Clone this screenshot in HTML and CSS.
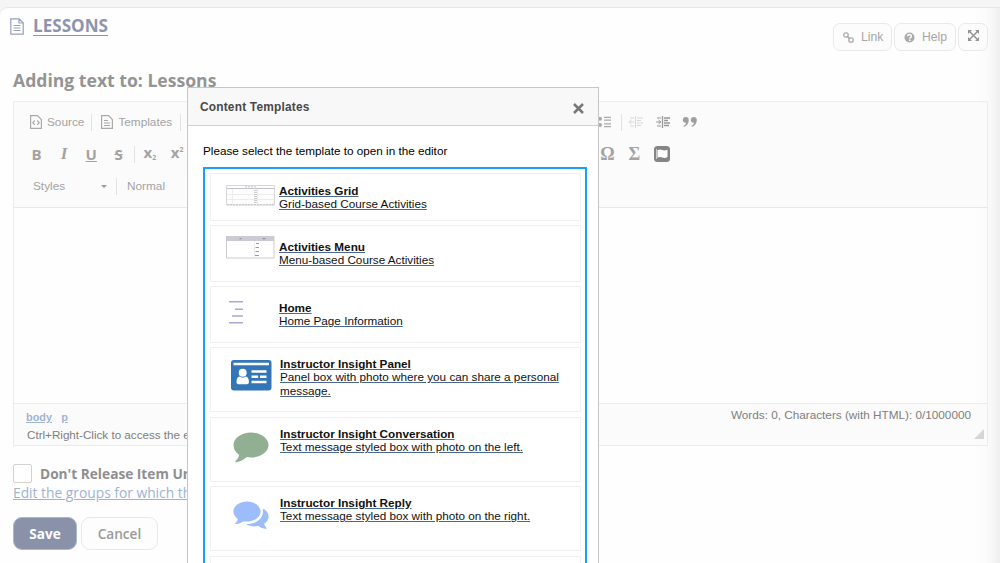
FILE: index.html
```html
<!DOCTYPE html>
<html lang="en">
<head>
  <meta charset="UTF-8">
  <title>Lessons</title>
  <link rel="stylesheet" href="styles.css">
</head>
<body>

  <main class="page">
    <header class="page-header">
      <svg class="doc-icon" width="14" height="17" viewBox="0 0 14 17" fill="none" stroke="#98a1bb">
        <path d="M.8 .8h8.4l4 4v11.4H.8zM9 .8V5h4.2M3.5 7.5h7M3.5 10h7M3.5 12.5h7" stroke-width="1.200"/>
      </svg>
      <a href="#" class="page-title">LESSONS</a>
      <div class="page-actions">
        <button class="action">
          <svg width="11" height="11" viewBox="0 0 11 11" fill="none" stroke="#aaa" stroke-width="1.3">
            <rect x=".8" y=".8" width="4.4" height="4.4" rx="1.9"/>
            <rect x="5.8" y="5.8" width="4.4" height="4.4" rx="1.9"/>
            <path d="M4 4l3 3"/>
          </svg>
          <span>Link</span>
        </button>
        <button class="action action-help">
          <svg width="11" height="11" viewBox="0 0 11 11">
            <circle cx="5.5" cy="5.5" r="5" fill="#aaa"/>
            <path d="M3.7 4.3c0-2.4 3.7-2.3 3.7-.1 0 1.2-1.7 1.2-1.7 2.5" fill="none" stroke="#fff" stroke-width="1.4"/>
            <path d="M5 7.5h1.5v1.4H5z" fill="#fff"/>
          </svg>
          <span>Help</span>
        </button>
        <button class="action action-expand">
          <svg width="11" height="11" viewBox="0 0 11 11" fill="#939393">
            <path d="M0 0h4L0 4zM11 0v4L7 0zM0 11V7l4 4zM11 11H7l4-4z"/>
            <path d="M1.5 1.5l8 8M9.5 1.5l-8 8" stroke="#939393" stroke-width="1.5"/>
          </svg>
        </button>
      </div>
    </header>

    <h2 class="form-title">Adding text to: Lessons</h2>

    <div class="editor">
      <div class="toolbar">
        <div class="tool-row">
          <div class="tools-left">
            <span class="tool-text">
              <svg width="12" height="14" viewBox="0 0 12 14" fill="none" stroke="#aaa">
                <path d="M.6 .6h6.9l3.9 3.9v8.9H.6zM4.8 5.5L2.8 7.7l2 2.2M7.2 5.5l2 2.2-2 2.2" stroke-width="1.2"/>
              </svg>
              Source
            </span>
            <i class="sep sep-source"></i>
            <span class="tool-text tool-templates">
              <svg width="12" height="14" viewBox="0 0 12 14" fill="none" stroke="#aaa">
                <path d="M.6 .6h6.9l3.9 3.9v8.9H.6zM3 5.500h4M3 8h6M3 10.500h6" stroke-width="1.2"/>
              </svg>
              Templates
            </span>
            <i class="sep sep-templates"></i>
          </div>
          <div class="tools-right">
            <svg class="tool" viewBox="0 0 16 16" fill="#aaa">
              <circle cx="3" cy="4.8" r="2"/><circle cx="3" cy="11" r="2"/>
              <path d="M7 2.800h7v1.200H7zM7 5.500h7v1.200H7zM7 9.300h7v1.200H7zM7 12h7v1.200H7z"/>
            </svg>
            <i class="sep"></i>
            <svg class="tool faded" viewBox="0 0 16 16" fill="none" stroke="#999">
              <path d="M7.5 2v12M2 4h4M9 4h6M9 6.5h4M9 9h6M9 11.5h4M2 12h4M1 8h5M3.5 6L1 8l2.5 2"/>
            </svg>
            <svg class="tool" viewBox="0 0 16 16" fill="none" stroke="#999">
              <path d="M7.500 2v12M9 4h6M9 6.500h4M9 9h6M9 11.500h5" stroke-width="1.300"/>
              <path d="M2 4h4M2 12h4M1 8h5M3.500 6L6 8l-2.500 2"/>
            </svg>
            <svg class="tool" viewBox="0 0 16 16" fill="#a0a0a0">
              <path d="M.8 6a3 3 0 1 1 6 0c0 3.3-1.8 5.7-4.8 6.9l-.5-1C3 11 4 10 4 8.700 2.200 9 .8 7.700 .8 6zM8.800 6a3 3 0 1 1 6 0c0 3.300-1.800 5.700-4.800 6.900l-.5-1c1.500-.9 2.500-1.900 2.500-3.200C10.200 9 8.800 7.700 8.800 6z"/>
            </svg>
          </div>
        </div>

        <div class="tool-row">
          <div class="tools-left tools-format">
            <b class="letter">B</b>
            <em class="letter letter-i">I</em>
            <b class="letter letter-u">U</b>
            <b class="letter letter-s">S</b>
            <i class="sep sep-format"></i>
            <b class="letter letter-x">x<small>2</small></b>
            <b class="letter letter-x sup">x<small>2</small></b>
          </div>
          <div class="tools-right tools-insert">
            <span class="symbol">Ω</span>
            <span class="symbol">Σ</span>
            <svg class="tool flag" viewBox="0 0 16 16">
              <rect width="16" height="16" rx="3.500" fill="#858585"/>
              <path d="M2.500 3v10" stroke="#fff" fill="none" stroke-width=".6"/>
              <path d="M3.500 4.300c2-1.300 3.500-.8 4.700-.3s2.700.8 5.300-.2v7.300c-2.500 1.300-4 .8-5.200.3s-2.800-.9-4.800.3z" fill="#fff"/>
            </svg>
          </div>
        </div>

        <div class="tool-row">
          <div class="tools-left tools-select">
            <span class="combo">Styles <i class="caret"></i></span>
            <i class="sep sep-styles"></i>
            <span>Normal</span>
          </div>
        </div>
      </div>

      <div class="edit-area"></div>

      <footer class="editor-footer">
        <div class="path">
          <a href="#">body</a>
          <a href="#">p</a>
          <p>Ctrl+Right-Click to access the editor menu</p>
        </div>
        <div class="count">Words: 0, Characters (with HTML): 0/1000000</div>
        <i class="resizer"></i>
      </footer>
    </div>

    <div class="release">
      <label class="release-label"><input type="checkbox"> Don't Release Item Until</label>
      <a href="#">Edit the groups for which this</a>
    </div>

    <div class="buttons">
      <button class="btn btn-save">Save</button>
      <button class="btn">Cancel</button>
    </div>
  </main>

  <div class="dialog">
    <div class="dialog-header">
      <span>Content Templates</span>
      <svg width="11" height="11" viewBox="0 0 11 11" stroke="#777" stroke-width="2.500">
        <path d="M1 1l9 9M10 1l-9 9"/>
      </svg>
    </div>
    <div class="dialog-body">
      <p>Please select the template to open in the editor</p>
      <div class="templates">
        <a href="#" class="template template-grid">
          <svg class="thumb" width="49" height="21" viewBox="0 0 49 21">
            <path d="M.5 .5h48v19.500H.5z" fill="#fdfdfd" stroke="#d8d8d8"/>
            <path d="M1 3.500h47" stroke="#bfc1cc"/>
            <path d="M1 9.500h47M1 14.500h47M6.500 4v16M31.500 4v16" stroke="#ececec"/>
            <path d="M1 19.700h47M19 1.800h11" stroke="#c4c4c4" stroke-dasharray="2 1"/>
            <path d="M29.500 5v14" stroke="#ccc" stroke-width="3" stroke-dasharray="1 1"/>
          </svg>
          <span class="info"><b>Activities Grid</b><span>Grid-based Course Activities</span></span>
        </a>
        <a href="#" class="template template-menu">
          <svg class="thumb" width="49" height="23" viewBox="0 0 49 23">
            <path d="M.5 .5h47.500v21.500H.5z" fill="#fff" stroke="#ccc"/>
            <path d="M0 0h48v5H0z" fill="#cbcad5"/>
            <path d="M13.500 2.700h2M36.500 2.700h3" stroke="#888"/>
            <path d="M28.500 5v17" stroke="#eee"/>
            <path d="M30 7.500h3M29.500 11.500h3.500M29.500 15.500h3.500M29 19.500h4" stroke="#999" stroke-width="1.200"/>
          </svg>
          <span class="info"><b>Activities Menu</b><span>Menu-based Course Activities</span></span>
        </a>
        <a href="#" class="template template-home">
          <svg class="thumb" width="49" height="25" viewBox="0 0 49 25" fill="none" stroke="#aaa8d4" stroke-width="1.500">
            <path d="M3 1.800h14M9 9.200h8M6 16h11M3 22.800h14"/>
          </svg>
          <span class="info"><b>Home</b><span>Home Page Information</span></span>
        </a>
        <a href="#" class="template template-panel">
          <svg class="thumb" width="41" height="31" viewBox="0 0 41 31">
            <rect width="40.500" height="30.500" rx="3" fill="#3276b8"/>
            <g fill="#fff">
              <path d="M2.500 2.700h35.500v2.500H2.500z"/>
              <circle cx="11.700" cy="12.800" r="4"/>
              <path d="M5.500 22c0-3 1-5.200 3-5.400 1.900 1.500 4.500 1.500 6.400 0 2 .2 3 2.400 3 5.400 0 1.500-.8 2.200-2 2.200H7.500c-1.200 0-2-.7-2-2.200z"/>
              <path d="M20.500 10.300h15v2.500h-15zM20.500 15.500h6.700V18h-6.700zM29 15.500h6.500V18H29zM20.500 20.700h15v2.500h-15z"/>
            </g>
          </svg>
          <span class="info"><b>Instructor Insight Panel</b><span>Panel box with photo where you can share a personal message.</span></span>
        </a>
        <a href="#" class="template template-talk">
          <svg class="thumb" width="36" height="32" viewBox="0 0 36 32" fill="#91af92">
            <path d="M18 .5c9.700 0 17.500 5.600 17.500 12.500S27.700 25.500 18 25.500c-1.500 0-3-.1-4.300-.4-3 3-6.500 4.700-10.300 5.200-1 .1-1.300-1-.6-1.700 2-1.900 3-3.300 3.200-5.800C2.500 20.500 .5 17 .5 13 .5 6.100 8.300 .5 18 .5z"/>
          </svg>
          <span class="info"><b>Instructor Insight Conversation</b><span>Text message styled box with photo on the left.</span></span>
        </a>
        <a href="#" class="template template-talk template-reply">
          <svg class="thumb" width="36" height="29" viewBox="0 0 36 29" fill="#9dbcfb">
            <path d="M14 .5c7.500 0 13.600 4.500 13.600 10S21.500 20.600 14 20.600c-1.200 0-2.400-.1-3.500-.4-2.300 1.600-4.900 2.700-7.500 2.900-.8 0-1-.7-.5-1.200 1.100-1.200 2-2.400 2.300-4C2 16 .4 13.500 .4 10.500 .4 5 6.500 .5 14 .5z"/>
            <path d="M29.900 7.500c3.500 1.800 5.700 4.700 5.700 7.900 0 3-1.800 5.600-4.600 7.400.4 1.500 1.200 2.700 2.300 3.900.5.500.2 1.200-.5 1.200-2.600-.2-5.200-1.300-7.500-2.900-4.700 1-9.400.1-12.300-2 9 .4 17-4.700 17-12.500 0-1-.1-2-.1-3z"/>
          </svg>
          <span class="info"><b>Instructor Insight Reply</b><span>Text message styled box with photo on the right.</span></span>
        </a>
        <a href="#" class="template template-talk"></a>
      </div>
    </div>
  </div>

</body>
</html>
```
FILE: styles.css
```css
* {
  box-sizing: border-box;
}

body {
  margin: 0;
  padding-top: 7px;
  height: 563px;
  overflow: hidden;
  position: relative;
  background-color: #f5f5f5;
  font-family: "Liberation Sans", Arial, sans-serif;
}

button {
  font-family: inherit;
}

.page {
  height: 556px;
  padding: 0 12px 0 13px;
  background: linear-gradient(to left, #eee, #fbfbfb 12px, #fefefe 25px);
  border-top: 1px solid #e6e6e6;
  border-radius: 8px 0 0 0;
}

.page-header {
  display: flex;
  height: 60px;
  margin-left: -3px;
}

.doc-icon {
  margin-top: 10px;
}

.page-title {
  margin: 6px 0 0 9px;
  font: bold 17.1px/24px "Open Sans", sans-serif;
  color: #8c95b0;
  text-underline-offset: 3px;
}

.page-actions {
  display: flex;
  gap: 2px;
  margin: 15px 0 0 auto;
}

.action {
  display: flex;
  align-items: center;
  gap: 7px;
  width: 59px;
  height: 28px;
  padding: 0 0 0 9px;
  border: 1px solid #e9e9e9;
  border-radius: 7px;
  background-color: #fcfcfc;
  color: #a6a6a6;
  font-size: 12.200px;
}

.action-help {
  width: 62px;
}

.action-expand {
  width: 30px;
  padding: 0 0 3px 9px;
}

.form-title {
  margin: 0;
  height: 33px;
  font: bold 17.6px/25px "Open Sans", sans-serif;
  color: #949494;
}

.editor {
  height: 345px;
  border: 1px solid #ececec;
}

.toolbar {
  height: 106px;
  padding-top: 4px;
  background-color: #fbfbfb;
  border-bottom: 1px solid #e8e8e8;
  color: #a3a3a3;
  font-size: 11.8px;
}

.tool-row {
  display: flex;
  height: 32px;
}

.tools-left {
  display: flex;
  align-items: center;
  width: 583px;
  padding-left: 16px;
}

.tools-right {
  display: flex;
  align-items: center;
}

.tool-text {
  display: flex;
  align-items: center;
  gap: 5px;
}

.sep {
  width: 1px;
  height: 17px;
  background-color: #e3e3e3;
}

.sep-source {
  margin: 0 9px 0 7px;
}

.sep-templates {
  margin-left: 8px;
}

.tool {
  width: 16px;
  height: 16px;
  margin-right: 11px;
}

.tools-right .sep {
  margin: 0 6px 0 -3px;
}

.faded {
  opacity: .35;
}

.tools-format {
  padding-left: 9px;
}

.letter {
  width: 27.300px;
  text-align: center;
  font: bold 15px/18px "Open Sans", sans-serif;
}

.letter-i {
  font: italic bold 17px/18px "Liberation Serif", serif;
}

.letter-u {
  text-decoration: underline;
}

.letter-s {
  text-decoration: line-through;
}

.letter-x small {
  font-size: 7px;
  position: relative;
  top: 2px;
}

.sup small {
  top: -6px;
}

.sep-format {
  margin: 0 1px 0 2px;
}

.tools-insert {
  padding-left: 2px;
}

.symbol {
  width: 27px;
  text-align: center;
  font: bold 18px/20px "Liberation Serif", serif;
  margin-left: -5px;
  margin-right: 5px;
}

.flag {
  margin-left: 1px;
}

.tools-select {
  padding-left: 19px;
}

.combo {
  display: flex;
  align-items: center;
  justify-content: space-between;
  width: 74px;
}

.caret {
  border: 3px solid transparent;
  border-top-color: #999;
  border-bottom: 0;
}

.sep-styles {
  margin: 0 10px 0 9px;
}

.edit-area {
  height: 195px;
}

.editor-footer {
  display: flex;
  position: relative;
  justify-content: space-between;
  height: 42px;
  padding: 4px 16px 0 12px;
  background-color: #fbfbfb;
  border-top: 1px solid #ececec;
  color: #7e7e7e;
  font-size: 11.750px;
  line-height: 14px;
}

.path {
  padding-top: 2px;
}

.path a {
  margin-right: 6px;
  color: #9db5d2;
  font-size: 10.900px;
  font-weight: bold;
}

.path p {
  margin: 4px 0 0 1px;
  font-size: 11.650px;
}

.resizer {
  position: absolute;
  right: 3px;
  bottom: 6px;
  border: 5px solid transparent;
  border-right-color: #d6d6d6;
  border-bottom-color: #d6d6d6;
}

.release {
  padding-top: 17px;
  font: 13.800px/18px "Open Sans", sans-serif;
}

.release-label {
  display: flex;
  align-items: center;
  gap: 8px;
  height: 21px;
  color: #8f8f8f;
  font-size: 13.700px;
  font-weight: bold;
}

.release-label input {
  appearance: none;
  width: 19px;
  height: 19px;
  margin: 0 0 1px;
  border: 1px solid #d2d2d2;
  border-radius: 2px;
  background-color: #fff;
}

.release a {
  color: #9cb4d2;
}

.buttons {
  display: flex;
  gap: 4px;
  margin-top: 15px;
}

.btn {
  width: 77px;
  height: 33px;
  padding: 0;
  border: 1px solid #e8e8e8;
  border-radius: 9px;
  background-color: #fdfdfd;
  color: #9a9a9a;
  font: 600 13.600px "Open Sans", sans-serif;
}

.btn-save {
  width: 64px;
  border-color: #a6b9cd;
  background-color: #8a92aa;
  color: #fff;
  font-weight: bold;
}

/* template picker, on top of the page */
.dialog {
  position: absolute;
  top: 87px;
  left: 187px;
  width: 412px;
  height: 476px;
  border: 1px solid #c6c6c6;
  border-bottom: 0;
  background-color: #fff;
}

.dialog-header {
  display: flex;
  align-items: center;
  justify-content: space-between;
  height: 38px;
  padding: 1px 14px 0 12px;
  background-color: #f8f8f8;
  border-bottom: 1px solid #d1d1d1;
  color: #484848;
  font-size: 11.900px;
  font-weight: bold;
  letter-spacing: .2px;
}

.dialog-header svg {
  margin-top: 2px;
}

.dialog-body {
  padding: 18px 11px 0 15px;
  font-size: 11.730px;
  line-height: 14px;
}

.dialog-body p {
  margin: 0 0 9px;
}

.templates {
  height: 396px;
  padding: 4px 4px 0 5px;
  overflow: hidden;
  border: 2px solid #1b9ffa;
  border-bottom: 0;
}

.template {
  display: flex;
  height: 57px;
  margin-bottom: 4px;
  padding: 10px 15px 0;
  border: 1px solid #f0f0f0;
  color: #111;
  text-decoration: none;
}

.thumb {
  flex: none;
  margin-right: 4px;
}

.info {
  margin-top: -1px;
  padding-top: 5px;
  line-height: 13.400px;
}

.info b,
.info span {
  display: table;
  text-decoration: underline;
  text-decoration-color: #48688f;
}

.template-grid {
  height: 48px;
  padding-top: 11px;
}

.template-grid .info {
  padding-top: 0;
}

.template-home .thumb {
  margin-top: 3px;
}

.template-panel,
.template-talk {
  height: 65px;
}

.template-panel {
  margin-bottom: 5px;
}

.template-panel .thumb {
  margin: 2px 8px 0 5px;
}

.template-panel .info,
.template-talk .info {
  padding-top: 0;
}

.template-talk .thumb {
  margin: 4px 11px 0 7px;
}

.template-reply {
  margin-bottom: 5px;
}
```
